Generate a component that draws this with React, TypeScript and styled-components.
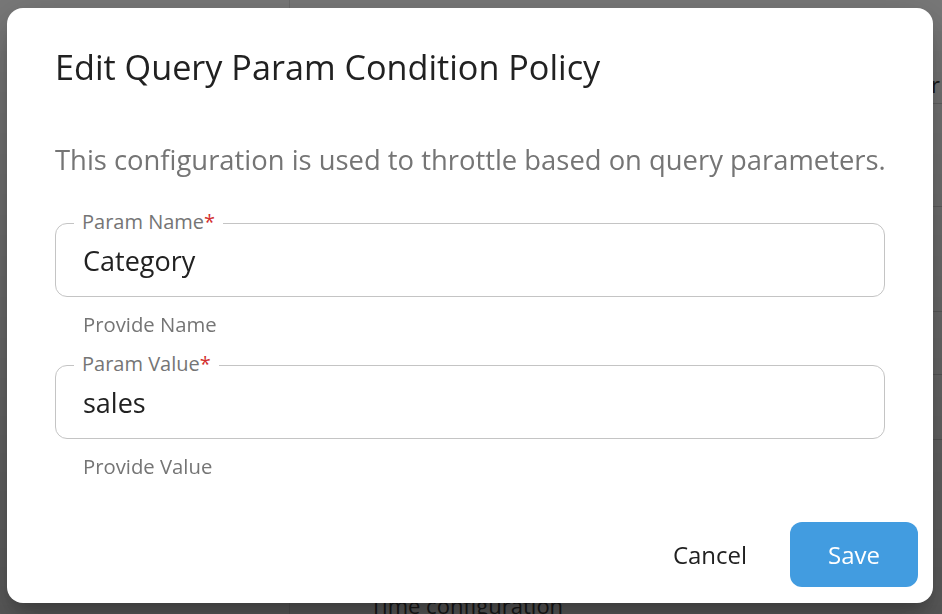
import React from "react";
import styled, { createGlobalStyle } from "styled-components";

const GlobalStyle = createGlobalStyle`
  html, body {
    margin: 0;
    padding: 0;
    height: 100%;
    overflow: hidden;
    background: #ffffff;
    font-family: "Open Sans", "Liberation Sans", sans-serif;
  }
  * {
    box-sizing: border-box;
  }
`;

const S = {
  Page: styled.div`
    display: grid;
    grid-template-columns: 290px 1fr;
    height: 100vh;
    color: #333333;
  `,
  Sidebar: styled.aside`
    border-right: 1px solid #e4e4e4;
  `,
  Main: styled.main`
    display: flex;
    flex-direction: column;
  `,
  Row: styled.div<{ $h: number }>`
    height: ${(p) => p.$h}px;
    display: flex;
    align-items: flex-end;
    justify-content: flex-end;
    border-bottom: 1px solid #d6d6d6;
    margin-left: 320px;
    padding: 0 2px 4px 0;
    font-size: 22px;
    overflow: hidden;
  `,
  Section: styled.div`
    margin-top: auto;
    padding: 0 0 0 80px;
    height: 24px;
    font-size: 22px;
    color: #444444;
  `,
  Overlay: styled.div`
    position: fixed;
    inset: 0;
    display: flex;
    align-items: flex-start;
    justify-content: flex-start;
    padding: 8px 0 0 7px;
    background: linear-gradient(
      to bottom,
      rgba(0, 0, 0, 0.53),
      rgba(0, 0, 0, 0.6) 60%,
      rgba(0, 0, 0, 0.65)
    );
  `,
  Dialog: styled.div`
    width: 926px;
    background: #ffffff;
    border-radius: 16px;
    box-shadow: 0 11px 15px -7px rgba(0, 0, 0, 0.2),
      0 24px 38px 3px rgba(0, 0, 0, 0.14), 0 9px 46px 8px rgba(0, 0, 0, 0.12);
    display: flex;
    flex-direction: column;
  `,
  Title: styled.h2`
    margin: 0;
    padding: 39px 48px 0;
    font-size: 34.2px;
    line-height: 40px;
    font-weight: 400;
    color: #212121;
  `,
  Content: styled.div`
    padding: 0 48px;
    display: flex;
    flex-direction: column;
  `,
  Description: styled.p`
    margin: 55px 0 0;
    font-size: 27.4px;
    line-height: 36px;
    white-space: nowrap;
    color: #757575;
  `,
  Field: styled.div<{ $top: number }>`
    margin-top: ${(p) => p.$top}px;
    display: flex;
    flex-direction: column;
  `,
  Box: styled.div`
    position: relative;
    height: 74px;
    border: 1.5px solid #c4c4c4;
    border-radius: 12px;
    display: flex;
    align-items: center;
    padding: 0 27px;
  `,
  Label: styled.label`
    position: absolute;
    left: 18px;
    top: -16px;
    padding: 0 8px;
    background: #ffffff;
    font-size: 20px;
    line-height: 28px;
    color: #757575;
  `,
  Required: styled.span`
    color: #d32f2f;
  `,
  Input: styled.input`
    border: none;
    outline: none;
    width: 100%;
    padding: 0;
    font-family: inherit;
    font-size: 27px;
    color: #212121;
    background: transparent;
  `,
  Helper: styled.p`
    margin: 13px 0 0 28px;
    font-size: 20.3px;
    line-height: 28px;
    color: #757575;
  `,
  Actions: styled.div`
    display: flex;
    justify-content: flex-end;
    gap: 16px;
    margin-top: 42px;
    padding: 0 15px 16px;
  `,
  Button: styled.button<{ $primary?: boolean }>`
    width: 128px;
    height: 65px;
    border: none;
    border-radius: 12px;
    font-family: inherit;
    font-size: 24px;
    cursor: pointer;
    color: ${(p) => (p.$primary ? "#ffffff" : "#212121")};
    background: ${(p) => (p.$primary ? "#429ce0" : "transparent")};
  `,
};

const Field = ({
  top,
  label,
  value,
  helper,
}: {
  top: number;
  label: string;
  value: string;
  helper: string;
}) => (
  <S.Field $top={top}>
    <S.Box>
      <S.Label>
        {label}
        <S.Required>*</S.Required>
      </S.Label>
      <S.Input defaultValue={value} />
    </S.Box>
    <S.Helper>{helper}</S.Helper>
  </S.Field>
);

export default function App() {
  return (
    <>
      <GlobalStyle />
      <S.Page>
        <S.Sidebar />
        <S.Main>
          <S.Row $h={104}>Header</S.Row>
          <S.Row $h={103} />
          <S.Row $h={105} />
          <S.Row $h={63} />
          <S.Row $h={65} />
          <S.Section>Time configuration</S.Section>
        </S.Main>
      </S.Page>
      <S.Overlay>
        <S.Dialog role="dialog">
          <S.Title>Edit Query Param Condition Policy</S.Title>
          <S.Content>
            <S.Description>
              This configuration is used to throttle based on query parameters.
            </S.Description>
            <Field
              top={45}
              label="Param Name"
              value="Category"
              helper="Provide Name"
            />
            <Field
              top={27}
              label="Param Value"
              value="sales"
              helper="Provide Value"
            />
          </S.Content>
          <S.Actions>
            <S.Button>Cancel</S.Button>
            <S.Button $primary>Save</S.Button>
          </S.Actions>
        </S.Dialog>
      </S.Overlay>
    </>
  );
}
